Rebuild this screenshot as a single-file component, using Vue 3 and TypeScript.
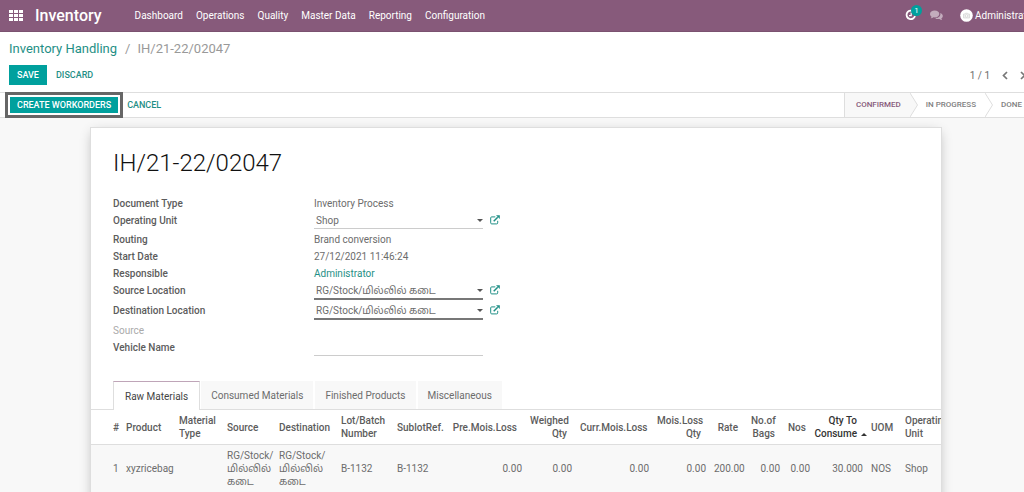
<script setup lang="ts">
import { ref } from 'vue'

interface Column {
  label: string
  value: string
  width: number
  numeric?: boolean
  sorted?: boolean
}

const menus: string[] = ['Dashboard', 'Operations', 'Quality', 'Master Data', 'Reporting', 'Configuration']
const stages: string[] = ['Confirmed', 'In Progress', 'Done']
const tabs: string[] = ['Raw Materials', 'Consumed Materials', 'Finished Products', 'Miscellaneous']
const activeTab = ref<string>('Raw Materials')
const vehicle = ref<string>('')
const shopLocation = 'RG/Stock/மில்லில் கடை'

const columns: Column[] = [
  { label: '#', value: '1', width: 31 },
  { label: 'Product', value: 'xyzricebag', width: 53 },
  { label: 'Material Type', value: '', width: 48 },
  { label: 'Source', value: shopLocation, width: 52 },
  { label: 'Destination', value: shopLocation, width: 62 },
  { label: 'Lot/Batch Number', value: 'B-1132', width: 56 },
  { label: 'SublotRef.', value: 'B-1132', width: 55 },
  { label: 'Pre.Mois.Loss', value: '0.00', width: 78, numeric: true },
  { label: 'Weighed Qty', value: '0.00', width: 50, numeric: true },
  { label: 'Curr.Mois.Loss', value: '0.00', width: 77, numeric: true },
  { label: 'Mois.Loss Qty', value: '0.00', width: 57, numeric: true },
  { label: 'Rate', value: '200.00', width: 37, numeric: true },
  { label: 'No.of Bags', value: '0.00', width: 37, numeric: true },
  { label: 'Nos', value: '0.00', width: 30, numeric: true },
  { label: 'Qty To Consume', value: '30.000', width: 53, numeric: true, sorted: true },
  { label: 'UOM', value: 'NOS', width: 34 },
  { label: 'Operating Unit', value: 'Shop', width: 60 },
]
</script>

<template>
  <div class="viewport">
    <div class="page">
      <header class="navbar">
        <button class="apps" aria-label="Applications">
          <svg width="14" height="11" viewBox="0 0 14 11" fill="#fff">
            <path d="M0 0h4v3H0zM5 0h4v3H5zM10 0h4v3h-4zM0 4h4v3H0zM5 4h4v3H5zM10 4h4v3h-4zM0 8h4v3H0zM5 8h4v3H5zM10 8h4v3h-4z" />
          </svg>
        </button>
        <a class="brand" href="#">Inventory</a>
        <nav class="menus">
          <a v-for="m in menus" :key="m" href="#">{{ m }}</a>
        </nav>
        <div class="systray">
          <button class="activity" aria-label="Activities">
            <svg width="12" height="12" viewBox="0 0 12 12" fill="none" stroke="#fff">
              <path d="M7.5 1.9A4.3 4.3 0 1 0 10 7" stroke-width="1.8" />
              <path d="M6.2 3.6v3H4" stroke-width="1.2" />
            </svg>
            <span class="badge">1</span>
          </button>
          <button class="chat" aria-label="Messages">
            <svg width="13" height="11" viewBox="0 0 13 11" fill="#c3acbd">
              <path d="M4.7.5C7.3.5 9.300 2 9.300 4S7.300 7.400 4.700 7.400c-.4 0-.8 0-1.200-.1C2.700 7.900 1.700 8.300.7 8.300c.4-.4.8-.9.9-1.500C.6 6.200 0 5.200 0 4 0 2 2.100.5 4.700.5z" />
              <path d="M10.200 2.900c1.600.5 2.600 1.600 2.600 3 0 1-.6 2-1.500 2.600.1.600.5 1.100.9 1.500-1 0-2-.4-2.800-1-.4.1-.8.1-1.200.1-1.200 0-2.200-.3-3-.9 2.900 0 5.200-1.800 5.200-4.200 0-.4-.1-.8-.2-1.100z" />
            </svg>
          </button>
          <button class="user">
            <svg width="13" height="13" viewBox="0 0 13 13">
              <circle cx="6.500" cy="6.500" r="6.300" fill="#fff" />
              <path d="M3.500 5h1.400l.6-.8h2l.6.8h1.400v4h-6z" fill="#eee" stroke="#d4d4d4" stroke-width=".7" />
              <circle cx="6.500" cy="6.900" r="1.200" fill="#fff" stroke="#ccc" stroke-width=".6" />
            </svg>
            <span>Administrator</span>
          </button>
        </div>
      </header>

      <section class="control">
        <div class="crumbs">
          <a href="#">Inventory Handling</a><span class="slash">/</span><span>IH/21-22/02047</span>
        </div>
        <div class="actions">
          <button class="primary save">SAVE</button>
          <button class="flat">DISCARD</button>
          <div class="pager">
            <span>1 / 1</span>
            <button aria-label="Previous">
              <svg width="6" height="9" viewBox="0 0 6 9"><path d="M5 1 1.500 4.500 5 8" fill="none" stroke="#777" stroke-width="1.700" /></svg>
            </button>
            <button aria-label="Next">
              <svg width="6" height="9" viewBox="0 0 6 9"><path d="M1 1l3.500 3.500L1 8" fill="none" stroke="#777" stroke-width="1.700" /></svg>
            </button>
          </div>
        </div>
      </section>

      <section class="statusbar">
        <button class="primary create">CREATE WORKORDERS</button>
        <button class="flat cancel">CANCEL</button>
        <ol class="stages">
          <li v-for="(s, i) in stages" :key="s" :class="{ current: i === 0 }">
            <span>{{ s }}</span>
            <svg v-if="i < stages.length - 1" width="8" height="24" viewBox="0 0 8 24">
              <path d="M0 0l7.500 12L0 24z" :fill="i === 0 ? '#f8f8f8' : '#fff'" />
              <path d="M0 0l7.500 12L0 24" fill="none" stroke="#dedede" />
            </svg>
          </li>
        </ol>
      </section>

      <main class="sheet">
        <h1>IH/21-22/02047</h1>
        <div class="fields">
          <span class="label">Document Type</span>
          <span>Inventory Process</span>

          <label class="label" for="unit">Operating Unit</label>
          <div class="picker">
            <div class="drop">
              <select id="unit"><option>Shop</option></select>
              <svg width="6" height="3" viewBox="0 0 6 3"><path d="M0 0h6L3 3z" fill="#555" /></svg>
            </div>
            <button class="external" aria-label="Open operating unit">
              <svg width="10" height="10" viewBox="0 0 10 10" fill="none" stroke="#1f8f86">
                <path d="M5.300 1.900H1.700q-1 0-1 1v5q0 1 1 1h5q1 0 1-1V5.800" />
                <path d="M3.700 6.200l4-4" stroke-width="1.500" />
                <path d="M6 .2h3.800V4z" fill="#1f8f86" stroke="none" />
              </svg>
            </button>
          </div>

          <span class="label">Routing</span>
          <span>Brand conversion</span>
          <span class="label">Start Date</span>
          <span>27/12/2021 11:46:24</span>
          <span class="label">Responsible</span>
          <a href="#">Administrator</a>

          <template v-for="name in ['Source Location', 'Destination Location']" :key="name">
            <label class="label" :for="name.split(' ')[0]">{{ name }}</label>
            <div class="picker required">
              <div class="drop">
                <select :id="name.split(' ')[0]"><option>{{ shopLocation }}</option></select>
                <svg width="6" height="3" viewBox="0 0 6 3"><path d="M0 0h6L3 3z" fill="#555" /></svg>
              </div>
              <button class="external" :aria-label="'Open ' + name">
                <svg width="10" height="10" viewBox="0 0 10 10" fill="none" stroke="#1f8f86">
                  <path d="M5.300 1.900H1.700q-1 0-1 1v5q0 1 1 1h5q1 0 1-1V5.800" />
                  <path d="M3.700 6.200l4-4" stroke-width="1.500" />
                  <path d="M6 .2h3.800V4z" fill="#1f8f86" stroke="none" />
                </svg>
              </button>
            </div>
          </template>

          <span class="label empty">Source</span>
          <span></span>
          <label class="label" for="vehicle">Vehicle Name</label>
          <input id="vehicle" v-model="vehicle" type="text" />
        </div>

        <div class="tabs" role="tablist">
          <button
            v-for="t in tabs"
            :key="t"
            role="tab"
            :aria-selected="t === activeTab"
            :class="{ active: t === activeTab }"
            @click="activeTab = t"
          >{{ t }}</button>
        </div>

        <div class="lines">
          <table>
            <colgroup>
              <col v-for="c in columns" :key="c.label" :style="{ width: c.width + 'px' }" />
            </colgroup>
            <thead>
              <tr>
                <th v-for="c in columns" :key="c.label" :class="{ num: c.numeric, sorted: c.sorted }">
                  <div v-if="c.sorted" class="sort">
                    <span>{{ c.label }}</span>
                    <svg width="6" height="3" viewBox="0 0 6 3"><path d="M0 3h6L3 0z" fill="#333" /></svg>
                  </div>
                  <template v-else>{{ c.label }}</template>
                </th>
              </tr>
            </thead>
            <tbody>
              <tr>
                <td v-for="c in columns" :key="c.label" :class="{ num: c.numeric }">
                  <template v-if="c.value === shopLocation">RG/Stock/<wbr />மில்லில் கடை</template>
                  <template v-else>{{ c.value }}</template>
                </td>
              </tr>
            </tbody>
          </table>
        </div>
      </main>
    </div>
  </div>
</template>

<style>
body {
  margin: 0;
  background: #f8f8f8;
}
</style>

<style scoped>
.viewport {
  height: 100vh;
  overflow: hidden;
  background: #f8f8f8;
  color: #6c6c6c;
  font: 10px/17px Roboto, "Noto Sans Tamil", "Noto Sans", sans-serif;
}
/* the application is slightly wider than the window */
.page {
  width: calc(100% + 8px);
}
button,
input,
select {
  margin: 0;
  padding: 0;
  border: 0;
  border-radius: 0;
  background: none;
  color: inherit;
  font: inherit;
}
button {
  cursor: pointer;
}
svg {
  display: block;
  flex: none;
}
a {
  color: #1f8f86;
  text-decoration: none;
}
.navbar {
  display: flex;
  align-items: center;
  height: 32px;
  box-sizing: border-box;
  padding: 0 0 1px 9px;
  background: #875a7b;
  border-bottom: 1px solid #7b5270;
  color: #fff;
}
.navbar a {
  color: #fff;
}
.brand {
  margin: 0 33px 0 12px;
  font-size: 16px;
  font-weight: 500;
}
.menus {
  display: flex;
  gap: 13px;
}
.systray {
  display: flex;
  align-items: center;
  margin-left: auto;
  white-space: nowrap;
}
.activity {
  position: relative;
  margin-right: 13px;
}
.badge {
  position: absolute;
  top: -4px;
  left: 6px;
  width: 11px;
  height: 11px;
  border-radius: 50%;
  background: #00a09d;
  font-size: 8px;
  line-height: 11px;
  text-align: center;
}
.chat {
  margin-right: 17px;
}
.user {
  display: flex;
  align-items: center;
  gap: 2px;
  width: 72px;
}
.control {
  padding: 8px 6px 7px 9px;
  background: #fff;
  border-bottom: 1px solid #dedede;
}
.crumbs {
  font-size: 13px;
  color: #999;
}
.slash {
  margin: 0 7px 0 8px;
}
.actions {
  display: flex;
  align-items: center;
  margin-top: 8px;
}
.primary,
.flat {
  font-size: 9px;
  font-weight: 500;
}
.primary {
  background: #00a09d;
  color: #fff;
}
.save {
  height: 20px;
  padding: 0 8px;
}
.flat {
  padding: 0 9px;
  color: #1f8f86;
}
.pager {
  display: flex;
  align-items: center;
  gap: 12px;
  margin-left: auto;
}
.statusbar {
  display: flex;
  align-items: center;
  height: 24px;
  padding-left: 10px;
  background: #fff;
  border-bottom: 1px solid #dedede;
}
.create {
  height: 16px;
  padding: 0 7px;
  outline: 3px solid #666;
  outline-offset: 2px;
  line-height: 16px;
}
.stages {
  display: flex;
  height: 24px;
  margin: 0 0 0 auto;
  padding: 0;
  list-style: none;
  font-size: 8px;
  font-weight: 500;
  line-height: 24px;
  text-transform: uppercase;
  color: #808080;
}
.stages li {
  display: flex;
}
.stages span {
  padding: 0 9px 0 8px;
}
.stages .current {
  border-left: 1px solid #dedede;
  color: #875a7b;
}
.stages .current span {
  padding-left: 11px;
  background: #f8f8f8;
}
.stages li:last-child span {
  padding-right: 10px;
}
.sheet {
  margin: 9px 90px 0;
  padding: 20px 0 40px;
  background: #fff;
  border: 1px solid #dedede;
  box-shadow: 0 3px 12px -3px rgba(0, 0, 0, 0.3);
  box-sizing: border-box;
}
h1 {
  margin: 0 22px 17px;
  font-size: 24px;
  font-weight: 300;
  line-height: 30px;
  color: #111;
}
.fields {
  display: grid;
  grid-template-columns: 201px 186px;
  justify-content: start;
  padding: 0 22px;
}
.label {
  font-weight: 500;
  color: #5c5c5c;
}
.empty {
  font-weight: 400;
  color: #aaa;
}
.picker {
  display: flex;
  align-items: start;
  gap: 7px;
  height: 19px;
}
.required {
  height: 20px;
}
.drop {
  display: flex;
  align-items: center;
  flex: 1;
  height: 16px;
  border-bottom: 1px solid #ccc;
}
.required .drop {
  border-bottom: 2px solid #777;
}
.drop select {
  appearance: none;
  flex: 1;
  height: 16px;
  min-width: 0;
  padding: 2px 0 0 2px;
  line-height: 14px;
}
.external {
  margin-top: 3px;
}
.fields input {
  height: 17px;
  width: 169px;
  box-sizing: border-box;
  border-bottom: 1px solid #ccc;
}
.tabs {
  display: flex;
  gap: 2px;
  margin-top: 25px;
  padding: 0 22px;
  border-bottom: 1px solid #dedede;
}
.tabs button {
  height: 28px;
  padding: 0 10px;
  background: #f8f8f8;
}
.tabs .active {
  height: 29px;
  margin: 0 -1px -1px 0;
  padding: 0 11px;
  background: #fff;
  border: 1px solid #dedede;
  border-top-color: #bfa5b8;
  border-bottom: 0;
  color: #444;
}
.lines {
  overflow: hidden;
}
table {
  width: 870px;
  table-layout: fixed;
  border-collapse: collapse;
  line-height: 13px;
}
th,
td {
  padding: 4px;
  text-align: left;
}
th {
  height: 26px;
  font-weight: 500;
  color: #5c5c5c;
}
td {
  background: #f8f8f8;
  border-top: 1px solid #dedede;
}
th:first-child,
td:first-child {
  padding-left: 22px;
}
th.num {
  padding-right: 9px;
  text-align: right;
}
td.num {
  text-align: right;
}
th.sorted {
  padding: 4px 0;
  color: #333;
}
.sort {
  display: flex;
  align-items: end;
  gap: 4px;
}
.sort svg {
  margin-bottom: 4px;
}
</style>
